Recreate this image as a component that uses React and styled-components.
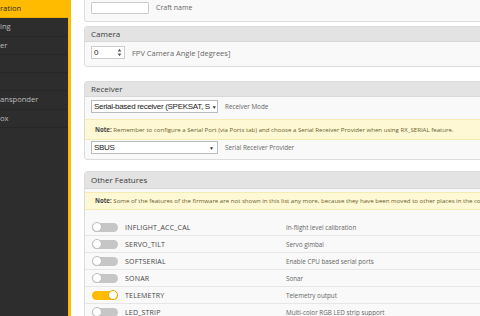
import React from 'react'
import styled, { createGlobalStyle } from 'styled-components'

const GlobalStyle = createGlobalStyle`
  html, body {
    margin: 0;
    padding: 0;
    background: #fff;
    overflow: hidden;
  }
  body {
    font-family: "Open Sans", "Liberation Sans", sans-serif;
    color: #333;
  }
`

const tabs = ['ration', 'ing', 'er', '', '', 'ansponder', 'ox']

const features = [
  { name: 'INFLIGHT_ACC_CAL', desc: 'In-flight level calibration', on: false },
  { name: 'SERVO_TILT', desc: 'Servo gimbal', on: false },
  { name: 'SOFTSERIAL', desc: 'Enable CPU based serial ports', on: false },
  { name: 'SONAR', desc: 'Sonar', on: false },
  { name: 'TELEMETRY', desc: 'Telemetry output', on: true },
  { name: 'LED_STRIP', desc: 'Multi-color RGB LED strip support', on: false },
]

function App() {
  return (
    <Layout>
      <GlobalStyle />
      <Sidebar>
        {tabs.map((t, i) => (
          <Tab key={i} active={i === 0}>{t}</Tab>
        ))}
      </Sidebar>
      <Main>
        <Panel first>
          <Body top={1} bottom={7}>
            <Field>
              <TextInput />
              <Label size={7}>Craft name</Label>
            </Field>
          </Body>
        </Panel>

        <Panel gap={4}>
          <Header>Camera</Header>
          <Body top={4} bottom={7}>
            <Field>
              <NumberInput>
                <span>0</span>
                <Spinner>
                  <svg width="5" height="9" viewBox="0 0 5 9">
                    <path d="M2.5 0.8 L4.3 3.4 H0.7 Z" fill="#555" />
                    <path d="M2.5 8.2 L4.3 5.6 H0.7 Z" fill="#555" />
                  </svg>
                </Spinner>
              </NumberInput>
              <Label size={7.5}>FPV Camera Angle [degrees]</Label>
            </Field>
          </Body>
        </Panel>

        <Panel gap={14}>
          <Header>Receiver</Header>
          <Body top={3} bottom={0}>
            <Field>
              <Select>
                <span>Serial-based receiver (SPEKSAT, S</span>
                <Arrow>▼</Arrow>
              </Select>
              <Label size={6.3}>Receiver Mode</Label>
            </Field>
          </Body>
          <Note top={6} pad={5.5}>
            <b>Note:</b> Remember to configure a Serial Port (via Ports tab) and choose a Serial Receiver Provider when using RX_SERIAL feature.
          </Note>
          <Body top={1} bottom={5}>
            <Field>
              <Select>
                <span>SBUS</span>
                <Arrow>▼</Arrow>
              </Select>
              <Label size={6.3}>Serial Receiver Provider</Label>
            </Field>
          </Body>
        </Panel>

        <Panel gap={11}>
          <Header tall>Other Features</Header>
          <Note top={3} pad={4}>
            <b>Note:</b> Some of the features of the firmware are not shown in this list any more, because they have been moved to other places in the configurator.
          </Note>
          <FeatureList>
            {features.map(f => (
              <FeatureRow key={f.name}>
                <Toggle on={f.on} />
                <FeatureName>{f.name}</FeatureName>
                <FeatureDesc>{f.desc}</FeatureDesc>
              </FeatureRow>
            ))}
          </FeatureList>
        </Panel>
      </Main>
    </Layout>
  )
}

export default App

const Layout = styled.div`
  display: flex;
  width: 480px;
  height: 316px;
  overflow: hidden;
`

const Sidebar = styled.div`
  width: 68px;
  flex-shrink: 0;
  background: #2d2d2d;
  border-right: 3px solid #ffbb00;
  display: flex;
  flex-direction: column;
`

const Tab = styled.div`
  height: 17.3px;
  line-height: 17.3px;
  flex-shrink: 0;
  border-bottom: 1px solid ${p => (p.active ? '#e8ab00' : '#272727')};
  background: ${p => (p.active ? '#ffbb00' : 'transparent')};
  color: ${p => (p.active ? '#2a2a2a' : '#bdbdbd')};
  font-size: 7.6px;
  white-space: nowrap;
  overflow: hidden;
`

const Main = styled.div`
  flex: 1;
  min-width: 0;
  overflow: hidden;
  padding-left: 13px;
  display: flex;
  flex-direction: column;
`

const Panel = styled.div`
  width: 440px;
  flex-shrink: 0;
  background: #f9f9f9;
  border: 1px solid #dcdcdc;
  border-top: ${p => (p.first ? 'none' : '1px solid #dcdcdc')};
  border-radius: ${p => (p.first ? '0 0 3px 3px' : '3px')};
  margin-top: ${p => (p.first ? '0' : `${p.gap}px`)};
  overflow: hidden;
`

const Header = styled.div`
  background: #e3e3e3;
  border-bottom: 1px solid #d8d8d8;
  height: ${p => (p.tall ? '16px' : '14px')};
  line-height: ${p => (p.tall ? '16px' : '14px')};
  padding-left: 6px;
  font-size: 8px;
  color: #3a3a3a;
`

const Body = styled.div`
  padding: ${p => p.top}px 6px ${p => p.bottom}px;
`

const Field = styled.div`
  display: flex;
  align-items: center;
  gap: 7px;
  height: 13px;
`

const Label = styled.span`
  font-size: ${p => p.size}px;
  color: #666;
  white-space: nowrap;
`

const TextInput = styled.div`
  width: 56px;
  height: 10px;
  background: #fff;
  border: 1px solid #ccc;
  border-radius: 1px;
`

const NumberInput = styled.div`
  width: 28px;
  height: 11px;
  background: #fff;
  border: 1px solid #ccc;
  display: flex;
  align-items: center;
  justify-content: space-between;
  padding: 0 2px 0 2px;
  box-sizing: content-box;
  font-family: "Liberation Sans", Arial, sans-serif;
  font-size: 8px;
  color: #222;
`

const Spinner = styled.span`
  display: flex;
  align-items: center;
`

const Select = styled.div`
  box-sizing: border-box;
  width: 127px;
  height: 13px;
  background: #fff;
  border: 1px solid #bbb;
  display: flex;
  align-items: center;
  justify-content: space-between;
  padding: 0 3px 0 2px;
  font-family: "Liberation Sans", Arial, sans-serif;
  font-size: 8px;
  letter-spacing: -0.3px;
  color: #222;
  white-space: nowrap;
  overflow: hidden;
`

const Arrow = styled.span`
  font-size: 5px;
  color: #333;
  margin-left: 2px;
  letter-spacing: 0;
`

const Note = styled.div`
  margin-top: ${p => p.top}px;
  background: #fff8d5;
  border-top: 1px solid #f5ecb5;
  border-bottom: 1px solid #f5ecb5;
  padding: ${p => p.pad}px 10px;
  font-size: 6.1px;
  line-height: 8px;
  color: #6b5e2a;
  white-space: nowrap;
  b {
    color: #444;
    font-weight: 700;
  }
`

const FeatureList = styled.div`
  margin-top: 9px;
  display: flex;
  flex-direction: column;
`

const FeatureRow = styled.div`
  height: 16px;
  border-bottom: 1px solid #e6e6e6;
  display: grid;
  grid-template-columns: 33px 161px 1fr;
  align-items: center;
  padding-left: 7px;
`

const Toggle = styled.span`
  position: relative;
  width: 26px;
  height: 9px;
  border-radius: 5px;
  background: ${p => (p.on ? '#ffbb00' : '#c6c6c6')};
  &::after {
    content: '';
    position: absolute;
    top: -0.5px;
    left: ${p => (p.on ? '16px' : '0')};
    width: 8px;
    height: 8px;
    border-radius: 50%;
    background: #fff;
    border: 1px solid ${p => (p.on ? '#e5a800' : '#bdbdbd')};
  }
`

const FeatureName = styled.span`
  font-size: 7px;
  color: #444;
  letter-spacing: 0.2px;
`

const FeatureDesc = styled.span`
  font-size: 6.3px;
  color: #666;
  white-space: nowrap;
`
